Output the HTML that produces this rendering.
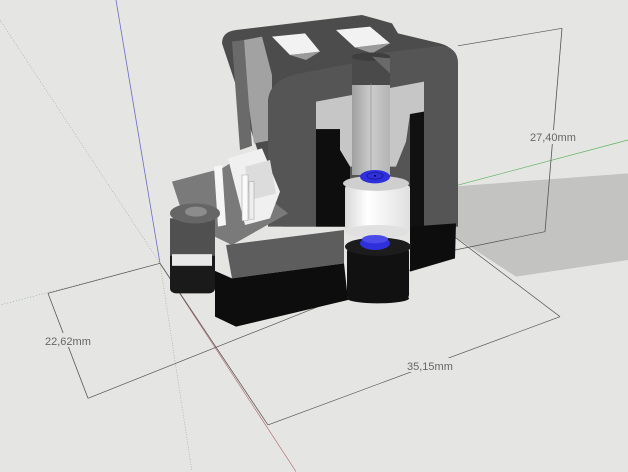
<!DOCTYPE html>
<html><head><meta charset="utf-8"><style>
html,body{margin:0;padding:0;width:628px;height:472px;overflow:hidden;background:#e5e5e3}
svg{display:block}
text{font-family:"Liberation Sans",sans-serif;font-size:11px;fill:#666}
</style></head><body>
<svg width="628" height="472" viewBox="0 0 628 472" xmlns="http://www.w3.org/2000/svg">
<defs>
<linearGradient id="cyl" x1="0" x2="1"><stop offset="0" stop-color="#d8d8d8"/><stop offset="0.35" stop-color="#ffffff"/><stop offset="1" stop-color="#e0e0e0"/></linearGradient>
<linearGradient id="pipe" x1="0" x2="1"><stop offset="0" stop-color="#a0a0a0"/><stop offset="0.5" stop-color="#cccccc"/><stop offset="1" stop-color="#b4b4b4"/></linearGradient>
</defs>
<rect width="628" height="472" fill="#e5e5e3"/>
<g transform="scale(1,0.8333)">
<!-- shadow -->
<polygon points="452,224 628,208 628,312 516,332 452,282" fill="#c3c3c1"/>
<!-- axes -->
<line x1="116" y1="0" x2="160" y2="316" stroke="#6a6ad0" stroke-width="0.8"/>
<line x1="452" y1="224" x2="628" y2="168" stroke="#5bb35b" stroke-width="0.8"/>
<line x1="160" y1="316" x2="0" y2="366" stroke="#7aa07a" stroke-width="0.6" stroke-dasharray="1,2"/>
<line x1="0" y1="24" x2="160" y2="316" stroke="#999" stroke-width="0.6" stroke-dasharray="1,2"/>
<line x1="160" y1="316" x2="192" y2="566" stroke="#999" stroke-width="0.6" stroke-dasharray="1,2"/>
<line x1="160" y1="316" x2="296" y2="566" stroke="#b06060" stroke-width="0.6"/>
<!-- dimension lines -->
<g stroke="#555" stroke-width="0.8" fill="none">
<line x1="458" y1="55" x2="562" y2="34"/>
<line x1="562" y1="34" x2="545" y2="278"/>
<line x1="455" y1="300" x2="545" y2="278"/>
<line x1="48" y1="352" x2="160" y2="316"/>
<line x1="48" y1="352" x2="88" y2="478"/>
<line x1="88" y1="478" x2="452" y2="304"/>
<line x1="452" y1="282" x2="560" y2="380"/>
<line x1="560" y1="380" x2="268" y2="510"/>
<line x1="160" y1="316" x2="268" y2="510"/>
</g>
<!-- back plate -->
<path d="M222,52 Q222,38 236,36 L362,18 L392,28 L398,40 L440,52 Q458,58 458,78 L458,272 L283,272 Z" fill="#4c4c4c"/>
<polygon points="272,44 305,40 320,62 290,66" fill="#f2f2f2"/>
<polygon points="336,36 370,32 390,52 355,57" fill="#f2f2f2"/>
<polygon points="290,66 320,62 306,72" fill="#9a9a9a"/>
<polygon points="355,57 390,52 372,64" fill="#9a9a9a"/>
<polygon points="244,48 262,44 272,90 272,168 254,172 248,120" fill="#a2a2a2"/>
<polygon points="232,50 244,48 252,175 240,180" fill="#6a6a6a"/>
<path d="M268,272 L268,120 Q270,95 300,88 L352,76 L352,68 L440,55 Q458,56 458,76 L458,272 Z" fill="#555"/>
<polygon points="316,122 424,98 424,134 410,137 406,170 396,200 350,200 340,180 340,155 316,155" fill="#c6c6c6"/>
<polygon points="316,155 340,155 340,180 350,200 350,272 316,272" fill="#0e0e0e"/>
<polygon points="410,137 424,134 424,272 410,272" fill="#111"/>
<!-- vertical pipe -->
<rect x="352" y="100" width="38" height="110" fill="url(#pipe)"/>
<rect x="352" y="68" width="38" height="34" fill="#4a4a4a"/>
<ellipse cx="371" cy="68" rx="19" ry="5" fill="#3e3e3e"/>
<polygon points="372,68 390,70 390,88" fill="#6a6a6a"/>
<line x1="371" y1="100" x2="371" y2="205" stroke="#888" stroke-width="0.6"/>
<!-- left arm top face -->
<polygon points="172,218 222,202 230,196 250,220 288,256 232,294 208,280 184,262" fill="#7a7a7a"/>
<polygon points="214,200 222,198 226,270 218,272" fill="#f5f5f5"/>
<polygon points="228,190 262,178 280,230 270,262 245,270" fill="#f0f0f0"/>
<polygon points="245,200 270,192 276,232 250,240" fill="#dcdcdc"/>
<rect x="242" y="210" width="6" height="55" fill="#fafafa" stroke="#999" stroke-width="0.5"/>
<rect x="249" y="218" width="5" height="45" fill="#eee" stroke="#999" stroke-width="0.5"/>
<polygon points="226,294 344,276 344,316 232,334" fill="#5d5d5d"/>
<!-- left cylinder -->
<rect x="170" y="262" width="45" height="90" rx="6" fill="#1a1a1a"/>
<rect x="170" y="262" width="45" height="45" fill="#505050"/>
<rect x="172" y="305" width="40" height="14" fill="#e8e8e8"/>
<ellipse cx="195" cy="256" rx="25" ry="12" fill="#666"/>
<ellipse cx="196" cy="254" rx="11" ry="6" fill="#8c8c8c"/>
<!-- black base -->
<polygon points="215,325 232,334 344,316 348,360 236,392 215,380" fill="#0d0d0d"/>
<polygon points="410,272 456,268 455,310 410,326" fill="#0d0d0d"/>
<!-- fitting -->
<rect x="345" y="222" width="65" height="56" rx="4" fill="url(#cyl)"/>
<ellipse cx="377" cy="278" rx="32" ry="8" fill="#e0e0e0"/>
<ellipse cx="376" cy="220" rx="33" ry="9" fill="#cfcfcf"/>
<ellipse cx="375" cy="212" rx="15" ry="8" fill="#2f2fdc"/>
<ellipse cx="375" cy="211" rx="8" ry="4" fill="none" stroke="#11118a" stroke-width="0.7"/>
<circle cx="375" cy="211" r="1" fill="#000"/>
<rect x="347" y="298" width="62" height="60" rx="4" fill="#111"/>
<ellipse cx="378" cy="358" rx="31" ry="6" fill="#111"/>
<ellipse cx="378" cy="296" rx="33" ry="11" fill="#1c1c1c"/>
<ellipse cx="375" cy="292" rx="15" ry="8" fill="#2f2fdc"/>
<ellipse cx="375" cy="287" rx="13" ry="5" fill="#4a4ae8"/>
</g>
<rect x="40" y="333" width="48" height="14" fill="#e5e5e3"/>
<text x="45" y="345">22,62mm</text>
<rect x="402" y="358" width="52" height="14" fill="#e5e5e3"/>
<text x="407" y="370">35,15mm</text>
<rect x="526" y="130" width="50" height="14" fill="#e5e5e3"/>
<text x="530" y="141">27,40mm</text>
</svg>
</body></html>
